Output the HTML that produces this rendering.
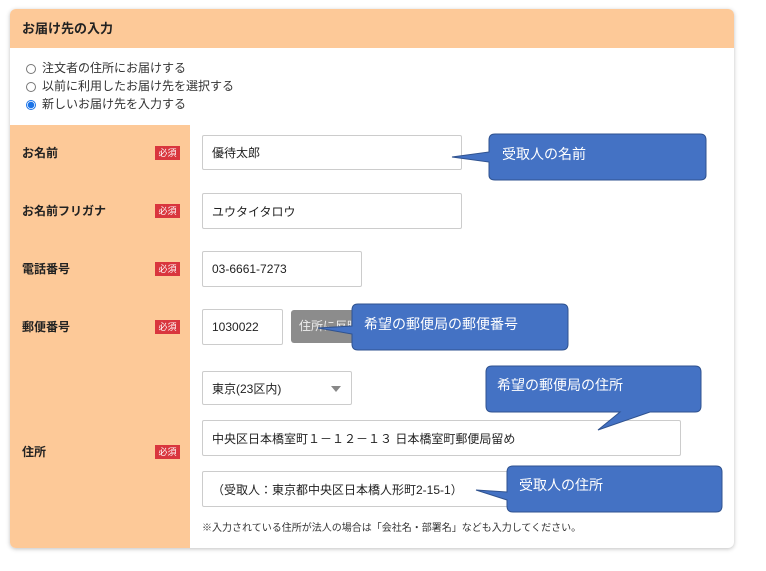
<!DOCTYPE html>
<html><head><meta charset="utf-8"><style>
body{margin:0;width:766px;height:571px;background:#fff;font-family:"Liberation Sans","Noto Sans CJK JP",sans-serif;position:relative;overflow:hidden}
.card{position:absolute;left:10px;top:9px;width:724px;height:539px;border-radius:6px;background:#fff;box-shadow:0 1px 4px rgba(0,0,0,.25);overflow:hidden}
.hd{position:absolute;left:0;top:0;width:724px;height:39px;background:#fdc998;font-size:13px;font-weight:bold;line-height:39px;padding-left:12px;box-sizing:border-box;color:#222}
.lc{position:absolute;left:0;top:116px;width:180px;height:423px;background:#fdc998}
.abs{position:absolute}
.r{font-size:12px;color:#333;position:absolute;left:16px}
.r i{display:inline-block;width:10px;height:10px;border:1px solid #777;border-radius:50%;margin-right:6px;vertical-align:-2px;box-sizing:border-box}
.r i.on{border:1px solid #1a73e8;background:radial-gradient(circle,#1a73e8 3px,#fff 3.5px)}
.lb{position:absolute;left:12px;font-size:12px;font-weight:bold;color:#222}
.bd{position:absolute;left:145px;width:25px;height:14px;background:#d9363e;color:#fff;font-size:9px;line-height:14px;text-align:center}
.in{position:absolute;border:1px solid #ccc;border-radius:2px;background:#fff;font-size:12px;color:#222;padding-left:9px;box-sizing:border-box;display:flex;align-items:center}
</style></head><body>
<div class="card">
<div class="hd">お届け先の入力</div>
<div class="r" style="top:50px"><i></i>注文者の住所にお届けする</div>
<div class="r" style="top:68px"><i></i>以前に利用したお届け先を選択する</div>
<div class="r" style="top:86px"><i class="on"></i>新しいお届け先を入力する</div>
<div class="lc"></div>
<div class="lb" style="top:135px">お名前</div><div class="bd" style="top:137px">必須</div>
<div class="lb" style="top:193px">お名前フリガナ</div><div class="bd" style="top:195px">必須</div>
<div class="lb" style="top:251px">電話番号</div><div class="bd" style="top:253px">必須</div>
<div class="lb" style="top:309px">郵便番号</div><div class="bd" style="top:311px">必須</div>
<div class="lb" style="top:434px">住所</div><div class="bd" style="top:436px">必須</div>
</div>
<div class="in" style="left:202px;top:135px;width:260px;height:35px">優待太郎</div>
<div class="in" style="left:202px;top:193px;width:260px;height:36px">ユウタイタロウ</div>
<div class="in" style="left:202px;top:251px;width:160px;height:36px">03-6661-7273</div>
<div class="in" style="left:202px;top:309px;width:81px;height:36px">1030022</div>
<div class="abs" style="left:291px;top:310px;width:70px;height:33px;background:#8c8c8c;border-radius:3px;color:#eee;font-size:12px;line-height:33px;padding-left:8px;box-sizing:border-box">住所に反映</div>
<div class="in" style="left:202px;top:371px;width:150px;height:34px">東京(23区内)<span style="position:absolute;left:128px;top:14px;border:5px solid transparent;border-top:6px solid #888"></span></div>
<div class="in" style="left:202px;top:420px;width:479px;height:36px">中央区日本橋室町１－１２－１３ 日本橋室町郵便局留め</div>
<div class="in" style="left:202px;top:471px;width:500px;height:36px">（受取人：東京都中央区日本橋人形町2-15-1）</div>
<div class="abs" style="left:202px;top:519px;font-size:10px;color:#333">※入力されている住所が法人の場合は「会社名・部署名」なども入力してください。</div>
<svg class="abs" style="left:0;top:0" width="766" height="571">
<g fill="#4472c4" stroke="#2f528f" stroke-width="1">
<path d="M495 134 H700 Q706 134 706 140 V175 Q706 180 700 180 H495 Q489 180 489 175 V162 L452 157 L489 152 V140 Q489 134 495 134Z"/>
<path d="M358 304 H562 Q568 304 568 310 V344 Q568 350 562 350 H358 Q352 350 352 344 V334 L318 328 L352 326 V310 Q352 304 358 304Z"/>
<path d="M492 366 H695 Q701 366 701 372 V406 Q701 412 695 412 H650 L598 430 L620 412 H492 Q486 412 486 406 V372 Q486 366 492 366Z"/>
<path d="M513 466 H716 Q722 466 722 472 V506 Q722 512 716 512 H513 Q507 512 507 506 V500 L476 490 L507 492 V472 Q507 466 513 466Z"/>
</g>
<g fill="#fff" font-size="14" font-family="Liberation Sans, Noto Sans CJK JP, sans-serif">
<text x="502" y="159">受取人の名前</text>
<text x="364" y="329">希望の郵便局の郵便番号</text>
<text x="497" y="390">希望の郵便局の住所</text>
<text x="519" y="490">受取人の住所</text>
</g></svg>
</body></html>
